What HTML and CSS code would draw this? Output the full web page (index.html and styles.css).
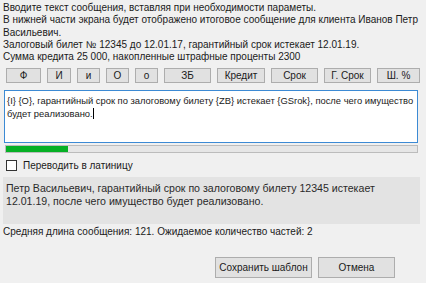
FILE: index.html
```html
<!DOCTYPE html>
<html lang="ru">
<head>
<meta charset="UTF-8" />
<title>Шаблон сообщения</title>
<link rel="stylesheet" href="styles.css">
</head>
<body>
<div class="intro">
  <p>Вводите текст сообщения, вставляя при необходимости параметы.</p>
  <p>В нижней части экрана будет отображено итоговое сообщение для клиента Иванов Петр Васильевич.</p>
  <p>Залоговый билет № 12345 до 12.01.17, гарантийный срок истекает 12.01.19.</p>
  <p>Сумма кредита 25 000, накопленные штрафные проценты 2300</p>
</div>
<div class="params">
  <button class="btn w-f">Ф</button>
  <button class="btn w-i">И</button>
  <button class="btn w-s">и</button>
  <button class="btn w-s">О</button>
  <button class="btn w-s">о</button>
  <button class="btn w-zb">ЗБ</button>
  <button class="btn w-kr">Кредит</button>
  <button class="btn w-sr">Срок</button>
  <button class="btn w-sr">Г. Срок</button>
  <button class="btn w-sh">Ш. %</button>
</div>
<div class="editor">{I} {O}, гарантийный срок по залоговому билету {ZB} истекает {GSrok}, после чего имущество будет реализовано.<span class="caret"></span></div>
<div class="progress"><div class="progress-fill" style="width:15%"></div></div>
<label class="check"><span class="box"></span>Переводить в латиницу</label>
<div class="preview">Петр Васильевич, гарантийный срок по залоговому билету 12345 истекает 12.01.19, после чего имущество будет реализовано.</div>
<p class="stats">Средняя длина сообщения: 121. Ожидаемое количество частей: 2</p>
<div class="actions">
  <button class="btn btn-save">Сохранить шаблон</button>
  <button class="btn btn-cancel">Отмена</button>
</div>
</body>
</html>
```

FILE: styles.css
```css
* {
  box-sizing: border-box;
}
html, body {
  margin: 0;
  padding: 0;
  background: #f0f0f0;
  color: #1a1a1a;
  font-family: "Liberation Sans", Arial, sans-serif;
  font-size: 10px;
  width: 426px;
  height: 283px;
  overflow: hidden;
}
body {
  display: flex;
  flex-direction: column;
}
.intro {
  padding: 2px 3px 0 3px;
}
.intro p {
  margin: 0;
  line-height: 12.3px;
}
.params {
  display: flex;
  gap: 6px;
  margin: 5px 0 0 6px;
}
.btn {
  font-family: inherit;
  font-size: 10px;
  color: #1a1a1a;
  background: #e1e1e1;
  border: 1px solid #adadad;
  border-radius: 0;
  padding: 0;
  height: 15px;
  line-height: 13px;
}
.w-f { width: 35px; }
.w-i { width: 24px; }
.w-s { width: 23px; }
.w-zb { width: 47px; }
.w-kr { width: 48px; }
.w-sr { width: 47px; }
.w-sh { width: 43px; }
.editor {
  margin: 7px 8px 0 4px;
  height: 53px;
  background: #fff;
  border: 1px solid #3c8ad4;
  padding: 3px 1px 3px 2px;
  font-size: 9.4px;
  line-height: 13px;
}
.caret {
  display: inline-block;
  width: 1px;
  height: 11px;
  background: #000;
  vertical-align: -2px;
}
.progress {
  margin: 2px 8px 0 5px;
  height: 8px;
  background: #e6e6e6;
  border: 1px solid #bcbcbc;
}
.progress-fill {
  height: 100%;
  background: #06b025;
}
.check {
  display: flex;
  align-items: center;
  gap: 6px;
  margin: 6px 0 0 6px;
  height: 13px;
}
.box {
  width: 11px;
  height: 11px;
  background: #fff;
  border: 1px solid #333;
}
.preview {
  margin: 5px 6px 0 3px;
  height: 47px;
  background: #e3e3e3;
  padding: 5px 20px 5px 3px;
  font-size: 10.6px;
  line-height: 13px;
  color: #2a2a2a;
}
.stats {
  margin: 2px 0 0 3px;
  line-height: 12px;
}
.actions {
  display: flex;
  gap: 6px;
  margin: 19px 0 0 215px;
}
.btn-save {
  width: 97px;
  height: 21px;
}
.btn-cancel {
  width: 77px;
  height: 21px;
}
```
